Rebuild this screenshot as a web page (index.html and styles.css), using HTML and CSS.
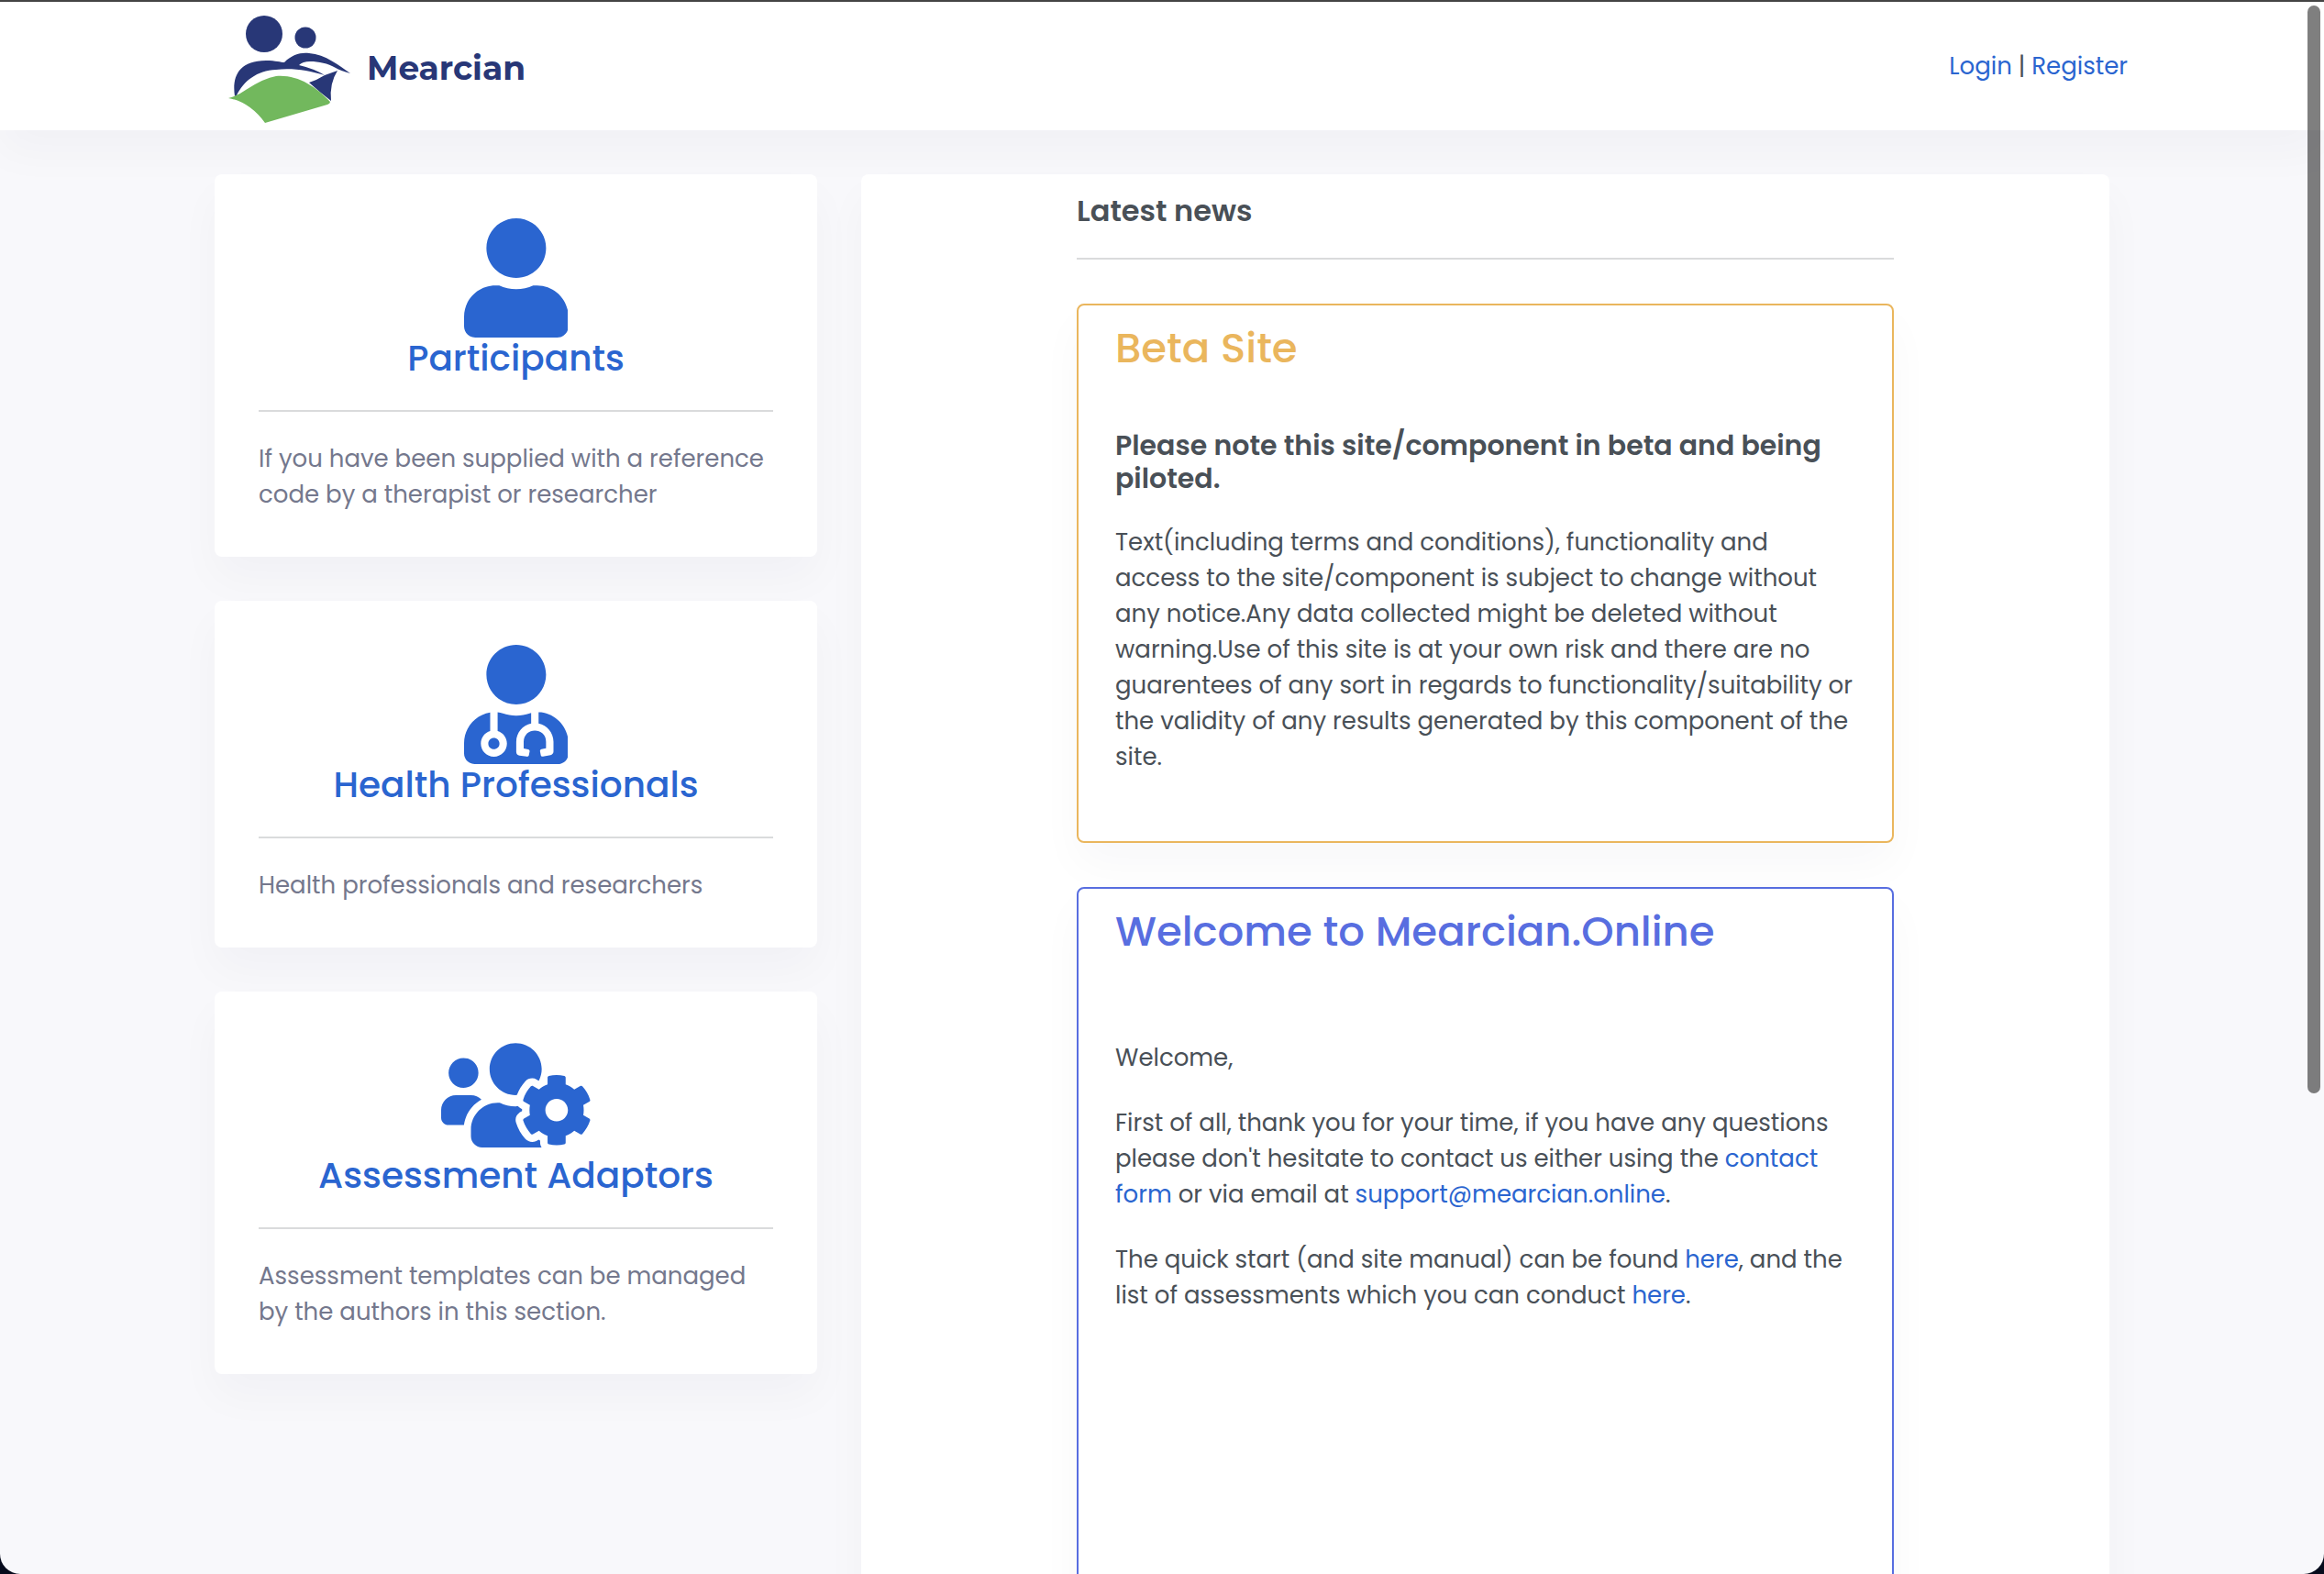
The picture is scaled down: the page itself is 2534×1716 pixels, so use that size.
FILE: index.html
```html
<!DOCTYPE html>
<html lang="en">
<head>
<meta charset="utf-8">
<meta name="viewport" content="width=device-width, initial-scale=1">
<title>Mearcian</title>
<link rel="stylesheet" href="styles.css">
</head>
<body>
<div class="shell">
  <header class="topbar">
    <div class="topbar-inner">
      <a class="brand" href="#">
        <svg class="brand-mark" viewBox="0 0 136 120" aria-hidden="true">
          <g fill="#283777">
            <circle cx="40" cy="20" r="20"/>
            <circle cx="85" cy="24" r="11.500"/>
            <path d="M8 88C5 68 11 49 42 49C53 49 58 51 62 51C71 42 80 40 89 41C107 42 122 55 134 63C127 61 121 59 118 57C109 52 100 50 90 50Q82 50 78 54Q95 58 106 65C88 60 72 57 53 59C32 60 18 71 10 87Z"/>
            <path d="M106 65L120 60Q111 74 113 93Q100 83 89 73Q98 70 106 65Z"/>
          </g>
          <path d="M1 90Q12 87 20 81Q40 68 53 66C76 64 96 77 112 94Q112 96 109 97L41 117Q24 94 1 90Z" fill="#72b85d"/>
        </svg>
        <span class="brand-name">Mearcian</span>
      </a>
      <nav class="account"><a href="#">Login</a> | <a href="#">Register</a></nav>
    </div>
  </header>

  <main class="page">
    <div class="sections">
      <section class="card">
        <a class="card-link" href="#">
          <svg class="icon" viewBox="0 0 448 512" aria-hidden="true"><path d="M224 256c70.7 0 128-57.3 128-128S294.7 0 224 0 96 57.3 96 128s57.3 128 128 128zm89.6 32h-16.7c-22.2 10.2-46.9 16-72.9 16s-50.6-5.800-72.9-16h-16.7C60.2 288 0 348.2 0 422.4V464c0 26.5 21.5 48 48 48h352c26.5 0 48-21.5 48-48v-41.6c0-74.2-60.2-134.4-134.4-134.4z"/></svg>
          <h2 class="card-title">Participants</h2>
        </a>
        <hr class="rule">
        <p class="card-text">If you have been supplied with a reference code by a therapist or researcher</p>
      </section>
      <section class="card">
        <a class="card-link" href="#">
          <svg class="icon" viewBox="0 0 448 512" aria-hidden="true"><path d="M224 256c70.7 0 128-57.3 128-128S294.7 0 224 0 96 57.3 96 128s57.3 128 128 128zM104 424c0 13.3 10.7 24 24 24s24-10.7 24-24-10.7-24-24-24-24 10.7-24 24zm216-135.4v49c36.5 7.4 64 39.8 64 78.4v41.7c0 7.6-5.4 14.2-12.9 15.7l-32.2 6.4c-4.3.9-8.5-1.9-9.4-6.3l-3.1-15.7c-.9-4.3 1.9-8.6 6.3-9.4l19.3-3.9V416c0-62.8-96-65.1-96 1.9v26.7l19.3 3.9c4.3.9 7.1 5.1 6.3 9.4l-3.1 15.7c-.9 4.3-5.1 7.1-9.4 6.3l-31.2-4.2c-7.9-1.1-13.8-7.8-13.8-15.9V416c0-38.6 27.5-70.9 64-78.4v-45.2c-2.2.7-4.4 1.1-6.6 1.9-18 6.3-37.3 9.8-57.4 9.8s-39.4-3.5-57.4-9.8c-7.4-2.6-14.9-4.2-22.6-5.2v81.6c23.1 6.9 40 28.1 40 53.4 0 30.9-25.1 56-56 56s-56-25.1-56-56c0-25.3 16.9-46.5 40-53.4v-80.4C48.5 301 0 355.8 0 422.4v44.8C0 491.9 20.1 512 44.8 512h358.4c24.7 0 44.8-20.1 44.8-44.8v-44.8c0-72-56.8-130.3-128-133.8z"/></svg>
          <h2 class="card-title">Health Professionals</h2>
        </a>
        <hr class="rule">
        <p class="card-text">Health professionals and researchers</p>
      </section>
      <section class="card">
        <a class="card-link" href="#">
          <svg class="icon" viewBox="0 0 640 512" aria-hidden="true"><path d="M610.5 341.3c2.6-14.1 2.6-28.5 0-42.6l25.8-14.9c3-1.7 4.3-5.2 3.3-8.5-6.7-21.6-18.2-41.2-33.2-57.4-2.3-2.5-6-3.1-9-1.4l-25.8 14.9c-10.9-9.3-23.4-16.5-36.9-21.3v-29.8c0-3.4-2.4-6.4-5.7-7.1-22.3-5-45-4.8-66.2 0-3.3.7-5.7 3.7-5.7 7.1v29.8c-13.5 4.8-26 12-36.9 21.3l-25.8-14.9c-2.9-1.7-6.7-1.1-9 1.4-15 16.2-26.5 35.8-33.2 57.4-1 3.3.4 6.8 3.3 8.5l25.8 14.9c-2.6 14.1-2.6 28.5 0 42.6l-25.8 14.9c-3 1.7-4.3 5.2-3.3 8.5 6.7 21.6 18.2 41.1 33.2 57.4 2.3 2.5 6 3.1 9 1.4l25.8-14.9c10.9 9.3 23.4 16.5 36.9 21.3v29.8c0 3.4 2.4 6.4 5.7 7.1 22.3 5 45 4.8 66.2 0 3.3-.7 5.7-3.7 5.7-7.1v-29.8c13.5-4.8 26-12 36.9-21.3l25.8 14.9c2.9 1.7 6.7 1.1 9-1.4 15-16.2 26.5-35.8 33.2-57.4 1-3.3-.4-6.8-3.3-8.5l-25.8-14.9zM496 368.5c-26.8 0-48.5-21.8-48.5-48.5s21.8-48.5 48.5-48.5 48.5 21.8 48.5 48.5-21.7 48.5-48.5 48.5zM96 224c35.3 0 64-28.7 64-64s-28.7-64-64-64-64 28.7-64 64 28.7 64 64 64zm224 32c1.9 0 3.7-.5 5.6-.6 8.3-21.7 20.5-42.1 36.3-59.2 7.4-8 17.9-12.6 28.9-12.6 6.9 0 13.7 1.8 19.6 5.3l7.9 4.6c.8-.5 1.6-.9 2.4-1.4 7-14.6 11.2-30.8 11.2-48 0-61.9-50.1-112-112-112S208 82.1 208 144c0 61.9 50.1 112 112 112zm105.2 194.5c-2.3-1.2-4.6-2.6-6.8-3.9-8.2 4.8-15.3 9.8-27.5 9.8-10.9 0-21.4-4.6-28.9-12.6-18.3-19.8-32.3-43.9-40.2-69.6-10.7-34.5 24.9-49.7 25.8-50.3-.1-2.6-.1-5.2 0-7.8l-7.9-4.6c-3.8-2.2-7-5-9.8-8.1-3.3.2-6.5.6-9.8.6-24.6 0-47.6-6-68.5-16h-8.3C179.6 288 128 339.6 128 403.2V432c0 26.5 21.5 48 48 48h255.4c-3.7-6-6.2-12.8-6.2-20.3v-9.2zM173.1 274.6C161.5 263.1 145.6 256 128 256H64c-35.3 0-64 28.7-64 64v32c0 17.7 14.3 32 32 32h65.9c6.3-47.4 34.9-87.3 75.2-109.4z"/></svg>
          <h2 class="card-title">Assessment Adaptors</h2>
        </a>
        <hr class="rule">
        <p class="card-text">Assessment templates can be managed by the authors in this section.</p>
      </section>
    </div>

    <section class="news">
      <h2 class="news-heading">Latest news</h2>
      <hr class="rule">
      <article class="post post-warning">
        <h3 class="post-title">Beta Site</h3>
        <h4 class="post-lead">Please note this site/component in beta and being piloted.</h4>
        <p>Text(including terms and conditions), functionality and access to the site/component is subject to change without any notice.Any data collected might be deleted without warning.Use of this site is at your own risk and there are no guarentees of any sort in regards to functionality/suitability or the validity of any results generated by this component of the site.</p>
      </article>
      <article class="post post-primary">
        <h3 class="post-title">Welcome to Mearcian.Online</h3>
        <p>Welcome,</p>
        <p>First of all, thank you for your time, if you have any questions please don't hesitate to contact us either using the <a href="#">contact form</a> or via email at <a href="#">support@mearcian.online</a>.</p>
        <p>The quick start (and site manual) can be found <a href="#">here</a>, and the list of assessments which you can conduct <a href="#">here</a>.</p>
      </article>
    </section>
  </main>
  <div class="scroll-thumb" aria-hidden="true"></div>
</div>
</body>
</html>
```
FILE: styles.css
```css
* { box-sizing: border-box; }

html { background: #060b1c; }

body {
  margin: 0;
  color: #495057;
  font-family: Poppins, Inter, "Open Sans", sans-serif;
  font-size: 26px;
  line-height: 39px;
}

h2, h3, h4, p { margin: 0; }

a { color: #2a65d0; text-decoration: none; }

.shell {
  position: relative;
  height: 100vh;
  overflow: hidden;
  border-top: 2px solid #444;
  border-radius: 0 0 22px 22px;
  background: #f8f8fb;
}

.topbar {
  background: #fff;
  box-shadow: 0 24px 48px rgba(18, 38, 63, .03);
}

.topbar-inner {
  display: flex;
  align-items: center;
  justify-content: space-between;
  max-width: 2106px;
  height: 140px;
  margin: 0 auto;
}

.brand {
  display: flex;
  align-items: center;
  gap: 16px;
  padding: 10px 0 0 34px;
}

.brand-mark { width: 136px; height: 120px; }

.brand-name {
  padding-bottom: 6px;
  color: #283777;
  font-family: Montserrat, Inter, sans-serif;
  font-size: 36px;
  font-weight: 700;
}

.page {
  display: grid;
  grid-template-columns: 657fr 1361fr;
  align-items: start;
  gap: 48px;
  max-width: 2066px;
  margin: 0 auto;
  padding-top: 48px;
}

.sections { display: grid; gap: 48px; }

.card, .news {
  border-radius: 8px;
  background: #fff;
  box-shadow: 0 24px 48px rgba(18, 38, 63, .03);
}

.card { padding: 48px; }

.card-link {
  display: flex;
  flex-direction: column;
  align-items: center;
}

.icon { display: block; height: 130px; fill: currentColor; }

.card-title {
  padding-bottom: 2px;
  font-size: 39px;
  font-weight: 500;
  line-height: 45px;
}

.rule {
  height: 2px;
  margin: 32px 0;
  border: 0;
  background: #dadbdc;
}

.card-text { color: #74788d; }

.news { padding: 20px 235px 48px; }

.news-heading {
  font-size: 32px;
  font-weight: 600;
  line-height: 39px;
}

.post {
  margin-top: 48px;
  padding: 19px 40px 72px;
  border: 2px solid;
  border-radius: 8px;
  box-shadow: 0 24px 48px rgba(18, 38, 63, .03);
}

.post-title {
  margin-bottom: 60px;
  font-size: 45px;
  font-weight: 500;
  line-height: 56px;
}

.post-lead {
  margin-bottom: 32px;
  font-size: 30px;
  font-weight: 600;
  line-height: 36px;
}

.post p + p { margin-top: 32px; }

.post-warning { border-color: #eab65d; }
.post-warning .post-title { color: #eab65d; }

.post-primary { padding-bottom: 320px; border-color: #586ee0; }
.post-primary .post-title { margin-bottom: 90px; color: #586ee0; }

.scroll-thumb {
  position: absolute;
  top: 4px;
  right: 4px;
  width: 14px;
  height: 1186px;
  border-radius: 7px;
  background: rgba(0, 0, 0, .5);
}
```
